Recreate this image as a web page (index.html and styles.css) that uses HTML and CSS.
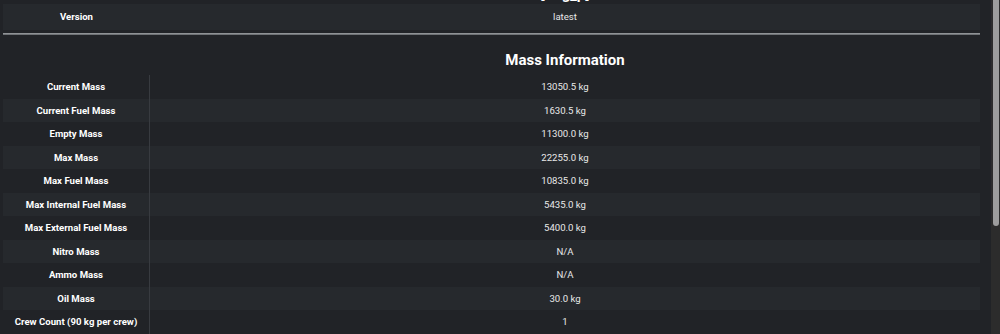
FILE: index.html
```html
<!DOCTYPE html>
<html lang="en">
<head>
<meta charset="utf-8">
<title>Mass Information</title>
<link rel="stylesheet" href="styles.css">
</head>
<body>
<div class="viewport">
  <main class="page">
    <section class="general">
      <div class="row title-row">
        <div class="label">Name</div>
        <div class="value title">[mig_p]</div>
      </div>
      <div class="row version-row striped">
        <div class="label">Version</div>
        <div class="value">latest</div>
      </div>
    </section>
    <hr class="divider">
    <section class="mass">
      <div class="section-head">
        <div class="head-spacer"></div>
        <h3 class="head-title">Mass Information</h3>
      </div>
      <div class="row data-row"><div class="label cell-label">Current Mass</div><div class="value">13050.5 kg</div></div>
      <div class="row data-row striped"><div class="label cell-label">Current Fuel Mass</div><div class="value">1630.5 kg</div></div>
      <div class="row data-row"><div class="label cell-label">Empty Mass</div><div class="value">11300.0 kg</div></div>
      <div class="row data-row striped"><div class="label cell-label">Max Mass</div><div class="value">22255.0 kg</div></div>
      <div class="row data-row"><div class="label cell-label">Max Fuel Mass</div><div class="value">10835.0 kg</div></div>
      <div class="row data-row striped"><div class="label cell-label">Max Internal Fuel Mass</div><div class="value">5435.0 kg</div></div>
      <div class="row data-row"><div class="label cell-label">Max External Fuel Mass</div><div class="value">5400.0 kg</div></div>
      <div class="row data-row striped"><div class="label cell-label">Nitro Mass</div><div class="value">N/A</div></div>
      <div class="row data-row"><div class="label cell-label">Ammo Mass</div><div class="value">N/A</div></div>
      <div class="row data-row striped"><div class="label cell-label">Oil Mass</div><div class="value">30.0 kg</div></div>
      <div class="row data-row"><div class="label cell-label">Crew Count (90 kg per crew)</div><div class="value">1</div></div>
    </section>
  </main>
</div>
<div class="scrollbar" aria-hidden="true">
  <div class="scroll-thumb"></div>
</div>
</body>
</html>
```

FILE: styles.css
```css
html {
  background: #212327;
}

body {
  margin: 0;
  height: 100vh;
  display: flex;
  overflow: hidden;
  background: #212327;
  color: #e6e6e6;
  font-family: Roboto, "Liberation Sans", sans-serif;
  font-size: 9.6px;
}

.viewport {
  flex: 1;
  min-width: 0;
  overflow: hidden;
}

.scrollbar {
  flex: 0 0 9px;
  box-sizing: border-box;
  padding: 0 1px 0 2px;
  background: #2c2c2c;
}

.scroll-thumb {
  height: 226px;
  background: #9d9d9d;
  border-radius: 0 0 3px 3px;
}

.page {
  margin: -22px 11px 0 3px;
}

.row {
  display: grid;
  grid-template-columns: 147px 1fr;
}

.striped {
  background: #26292d;
}

.label {
  font-weight: 700;
  color: #ffffff;
  text-align: center;
}

.value {
  text-align: center;
  color: #e8e8e8;
}

.title-row {
  padding-top: 6px;
  line-height: 20px;
}

.title {
  font-size: 15px;
  font-weight: 700;
  color: #ffffff;
}

.version-row {
  padding: 5px 0;
  line-height: 16px;
}

.divider {
  margin: 3px 0 0;
  border: 0;
  border-top: 1px solid #8f9295;
  border-bottom: 1px solid #6f7276;
  height: 0;
}

.section-head {
  display: grid;
  grid-template-columns: 147px 1fr;
  padding: 16px 0 6px;
}

.head-title {
  margin: 0;
  font-size: 15px;
  line-height: 18px;
  font-weight: 700;
  color: #ffffff;
  text-align: center;
}

.data-row {
  line-height: 15.5px;
}

.data-row > div {
  padding: 4px 0;
}

.cell-label {
  border-right: 1px solid #383b40;
}
```
